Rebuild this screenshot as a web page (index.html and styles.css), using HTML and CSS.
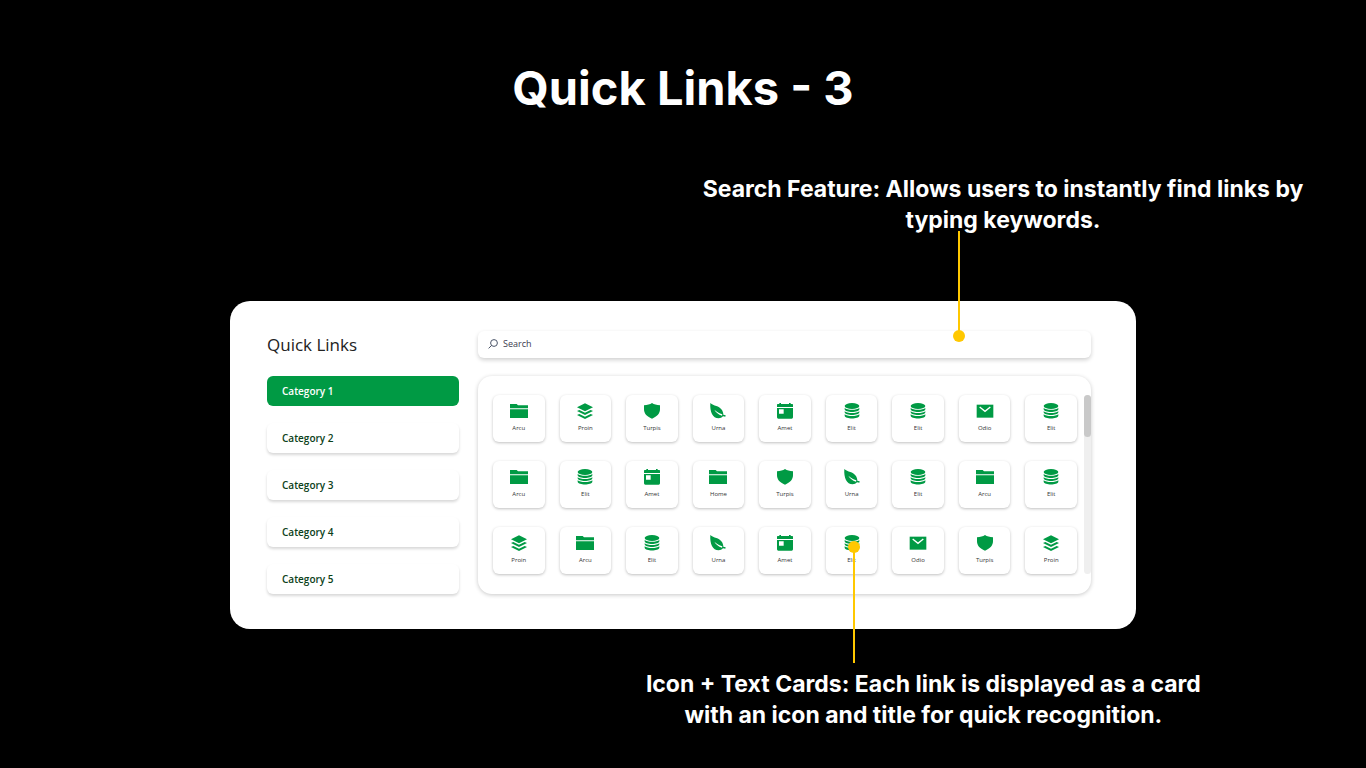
FILE: index.html
```html
<!DOCTYPE html>
<html lang="en">
<head>
  <meta charset="UTF-8" />
  <meta name="viewport" content="width=device-width, initial-scale=1.0"/>
  <title>Quick Links - 3</title>
  <link rel="stylesheet" href="styles.css">
</head>
<body>
  <!-- Icon sprite -->
  <svg class="sprite" aria-hidden="true">
    <symbol id="folder" viewBox="0 0 54 48">
      <path d="M0 3h20l4 4h30v9H0zM0 19h54v26H0z"/>
    </symbol>
    <symbol id="layers" viewBox="0 0 54 48">
      <path d="M27 1l24 12-24 12L3 13zM3 24l7-3 17 8 17-8 7 3-24 12zM3 36l7-3 17 8 17-8 7 3-24 12z"/>
    </symbol>
    <symbol id="shield" viewBox="0 0 54 48">
      <path d="M27 0c6 4 14 6 24 7v12c0 12-8 22-24 28C11 41 3 31 3 19V7c10-1 18-3 24-7z"/>
    </symbol>
    <symbol id="leaf" viewBox="0 0 54 48">
      <path fill-rule="evenodd" d="M4 0c5 5 11 7 18 9 12 4 21 13 21 26l7 2-1 4-7-1c-3 4-8 6-13 6C11 46 2 26 4 0zM16 20c5 8 12 14 23 18l1-4c-10-3-16-7-24-14z"/>
    </symbol>
    <symbol id="calendar" viewBox="0 0 54 48">
      <path fill-rule="evenodd" d="M3 12V5q0-2 2-2h5V0h5v3h24V0h5v3h5q2 0 2 2v7zM3 15h48v28q0 4-4 4H7q-4 0-4-4zM9 19v13h14V19z"/>
    </symbol>
    <symbol id="database" viewBox="0 0 54 48">
      <ellipse cx="27" cy="9" rx="22" ry="9"/>
      <path d="M5 15c7 7 37 7 44 0v4c-2 11-42 11-44 0zM5 25c7 7 37 7 44 0v3c-2 11-42 11-44 0zM5 34c7 7 37 7 44 0v4c-2 11-42 11-44 0z"/>
    </symbol>
    <symbol id="mail" viewBox="0 0 54 48">
      <path d="M2 5h50v39H2z"/>
      <path class="mail-flap" d="M11 12l16 13 16-13"/>
    </symbol>
  </svg>

  <h1 class="page-title">Quick Links - 3</h1>

  <p class="note note-search">Search Feature: Allows users to instantly find links by typing keywords.</p>

  <main class="panel">
    <aside class="sidebar">
      <h2>Quick Links</h2>
      <div class="categories">
        <button class="category active">Category 1</button>
        <button class="category">Category 2</button>
        <button class="category">Category 3</button>
        <button class="category">Category 4</button>
        <button class="category">Category 5</button>
      </div>
    </aside>

    <section class="content">
      <div class="search">
        <label for="search" aria-label="Search">
          <svg viewBox="0 0 10 10"><circle cx="6" cy="4" r="3.4"/><path d="M3.6 6.4L.6 9.4"/></svg>
        </label>
        <input type="text" id="search" placeholder="Search" />
        <span class="pointer pointer-search"></span>
      </div>

      <div class="links">
        <div class="grid">
          <a href="#" class="card"><svg><use href="#folder"/></svg>Arcu</a>
          <a href="#" class="card"><svg><use href="#layers"/></svg>Proin</a>
          <a href="#" class="card"><svg><use href="#shield"/></svg>Turpis</a>
          <a href="#" class="card"><svg><use href="#leaf"/></svg>Urna</a>
          <a href="#" class="card"><svg><use href="#calendar"/></svg>Amet</a>
          <a href="#" class="card"><svg><use href="#database"/></svg>Elit</a>
          <a href="#" class="card"><svg><use href="#database"/></svg>Elit</a>
          <a href="#" class="card"><svg><use href="#mail"/></svg>Odio</a>
          <a href="#" class="card"><svg><use href="#database"/></svg>Elit</a>

          <a href="#" class="card"><svg><use href="#folder"/></svg>Arcu</a>
          <a href="#" class="card"><svg><use href="#database"/></svg>Elit</a>
          <a href="#" class="card"><svg><use href="#calendar"/></svg>Amet</a>
          <a href="#" class="card"><svg><use href="#folder"/></svg>Home</a>
          <a href="#" class="card"><svg><use href="#shield"/></svg>Turpis</a>
          <a href="#" class="card"><svg><use href="#leaf"/></svg>Urna</a>
          <a href="#" class="card"><svg><use href="#database"/></svg>Elit</a>
          <a href="#" class="card"><svg><use href="#folder"/></svg>Arcu</a>
          <a href="#" class="card"><svg><use href="#database"/></svg>Elit</a>

          <a href="#" class="card"><svg><use href="#layers"/></svg>Proin</a>
          <a href="#" class="card"><svg><use href="#folder"/></svg>Arcu</a>
          <a href="#" class="card"><svg><use href="#database"/></svg>Elit</a>
          <a href="#" class="card"><svg><use href="#leaf"/></svg>Urna</a>
          <a href="#" class="card"><svg><use href="#calendar"/></svg>Amet</a>
          <a href="#" class="card"><svg><use href="#database"/></svg>Elit<span class="pointer pointer-card"></span></a>
          <a href="#" class="card"><svg><use href="#mail"/></svg>Odio</a>
          <a href="#" class="card"><svg><use href="#shield"/></svg>Turpis</a>
          <a href="#" class="card"><svg><use href="#layers"/></svg>Proin</a>
        </div>
        <div class="scrollbar"><div class="thumb"></div></div>
      </div>
    </section>
  </main>

  <p class="note note-cards">Icon + Text Cards: Each link is displayed as a card with an icon and title for quick recognition.</p>
</body>
</html>
```
FILE: styles.css
```css
* {
  box-sizing: border-box;
  margin: 0;
  padding: 0;
}

body {
  background-color: #000;
  color: #fff;
  font-family: "Open Sans", "Noto Sans", sans-serif;
  min-height: 100vh;
  padding-top: 58px;
}

.sprite {
  display: block;
  width: 0;
  height: 0;
}

.page-title {
  font-family: Inter, sans-serif;
  font-size: 47px;
  font-weight: 700;
  line-height: 60px;
  text-align: center;
}

/* Notes around the panel */
.note {
  font-family: Inter, sans-serif;
  font-size: 23px;
  font-weight: 700;
  line-height: 31px;
  text-align: center;
  max-width: 640px;
}

.note-search {
  margin: 56px 0 65px 50%;
}

.note-cards {
  max-width: 590px;
  margin: 40px 0 0 46%;
}

.pointer {
  position: absolute;
  width: 2px;
  background-color: #ffc800;
  z-index: 1;
}

.pointer::after {
  content: "";
  position: absolute;
  left: -5px;
  width: 12px;
  height: 12px;
  border-radius: 50%;
  background-color: #ffc800;
}

.pointer-search {
  right: 131px;
  bottom: 22px;
  height: 105px;
}

.pointer-search::after {
  bottom: -6px;
}

.pointer-card {
  left: 52%;
  top: 20px;
  height: 116px;
}

.pointer-card::after {
  top: -6px;
}

/* Panel */
.panel {
  display: flex;
  gap: 19px;
  width: 100%;
  max-width: 906px;
  margin: 0 auto;
  padding: 30px 45px 35px 37px;
  background-color: #fff;
  border-radius: 20px;
}

.sidebar {
  display: flex;
  flex-direction: column;
  flex: 0 0 192px;
}

.sidebar h2 {
  color: #222;
  font-size: 17px;
  font-weight: 500;
  line-height: 28px;
  margin-bottom: 17px;
}

.categories {
  display: flex;
  flex-direction: column;
  gap: 17px;
}

.category {
  height: 30px;
  padding: 0 15px;
  border: none;
  border-radius: 6px;
  background-color: #fff;
  color: #0b4119;
  font-family: inherit;
  font-size: 10px;
  font-weight: 600;
  text-align: left;
  cursor: pointer;
  box-shadow: 0 2px 3px #00000028;
}

.category.active {
  background-color: #009a44;
  color: #fff;
  box-shadow: none;
}

.content {
  flex: 1;
  min-width: 0;
}

.search {
  position: relative;
  display: flex;
  align-items: center;
  gap: 5px;
  height: 27px;
  margin-bottom: 18px;
  padding: 0 10px 2px;
  border-radius: 6px;
  box-shadow: 0 2px 4px #00000030;
}

.search label {
  display: flex;
}

.search svg {
  width: 10px;
  height: 10px;
  fill: none;
  stroke: #4a5468;
}

.search input {
  flex: 1;
  border: none;
  outline: none;
  background: none;
  color: #3b3b4f;
  font-family: inherit;
  font-size: 9px;
}

.search input::placeholder {
  color: #3b3b4f;
}

.links {
  display: flex;
  gap: 7px;
  padding: 19px 0 20px 15px;
  border-radius: 14px;
  box-shadow: 0 1px 4px #00000038;
}

.grid {
  flex: 1;
  display: grid;
  grid-template-columns: repeat(9, 1fr);
  gap: 19px 15px;
}

.card {
  position: relative;
  display: flex;
  flex-direction: column;
  align-items: center;
  gap: 4px;
  height: 47px;
  padding-top: 8px;
  border-radius: 6px;
  color: #333;
  font-size: 6px;
  line-height: 10px;
  text-decoration: none;
  box-shadow: 0 1px 3px #00000040;
}

.card svg {
  width: 18px;
  height: 16px;
  fill: #009a44;
}

.mail-flap {
  fill: none;
  stroke: #fff;
  stroke-width: 4px;
}

.scrollbar {
  width: 7px;
  border-radius: 4px;
  background-color: #efefef;
}

.thumb {
  height: 42px;
  border-radius: 4px;
  background-color: #c9c9c9;
}
```
